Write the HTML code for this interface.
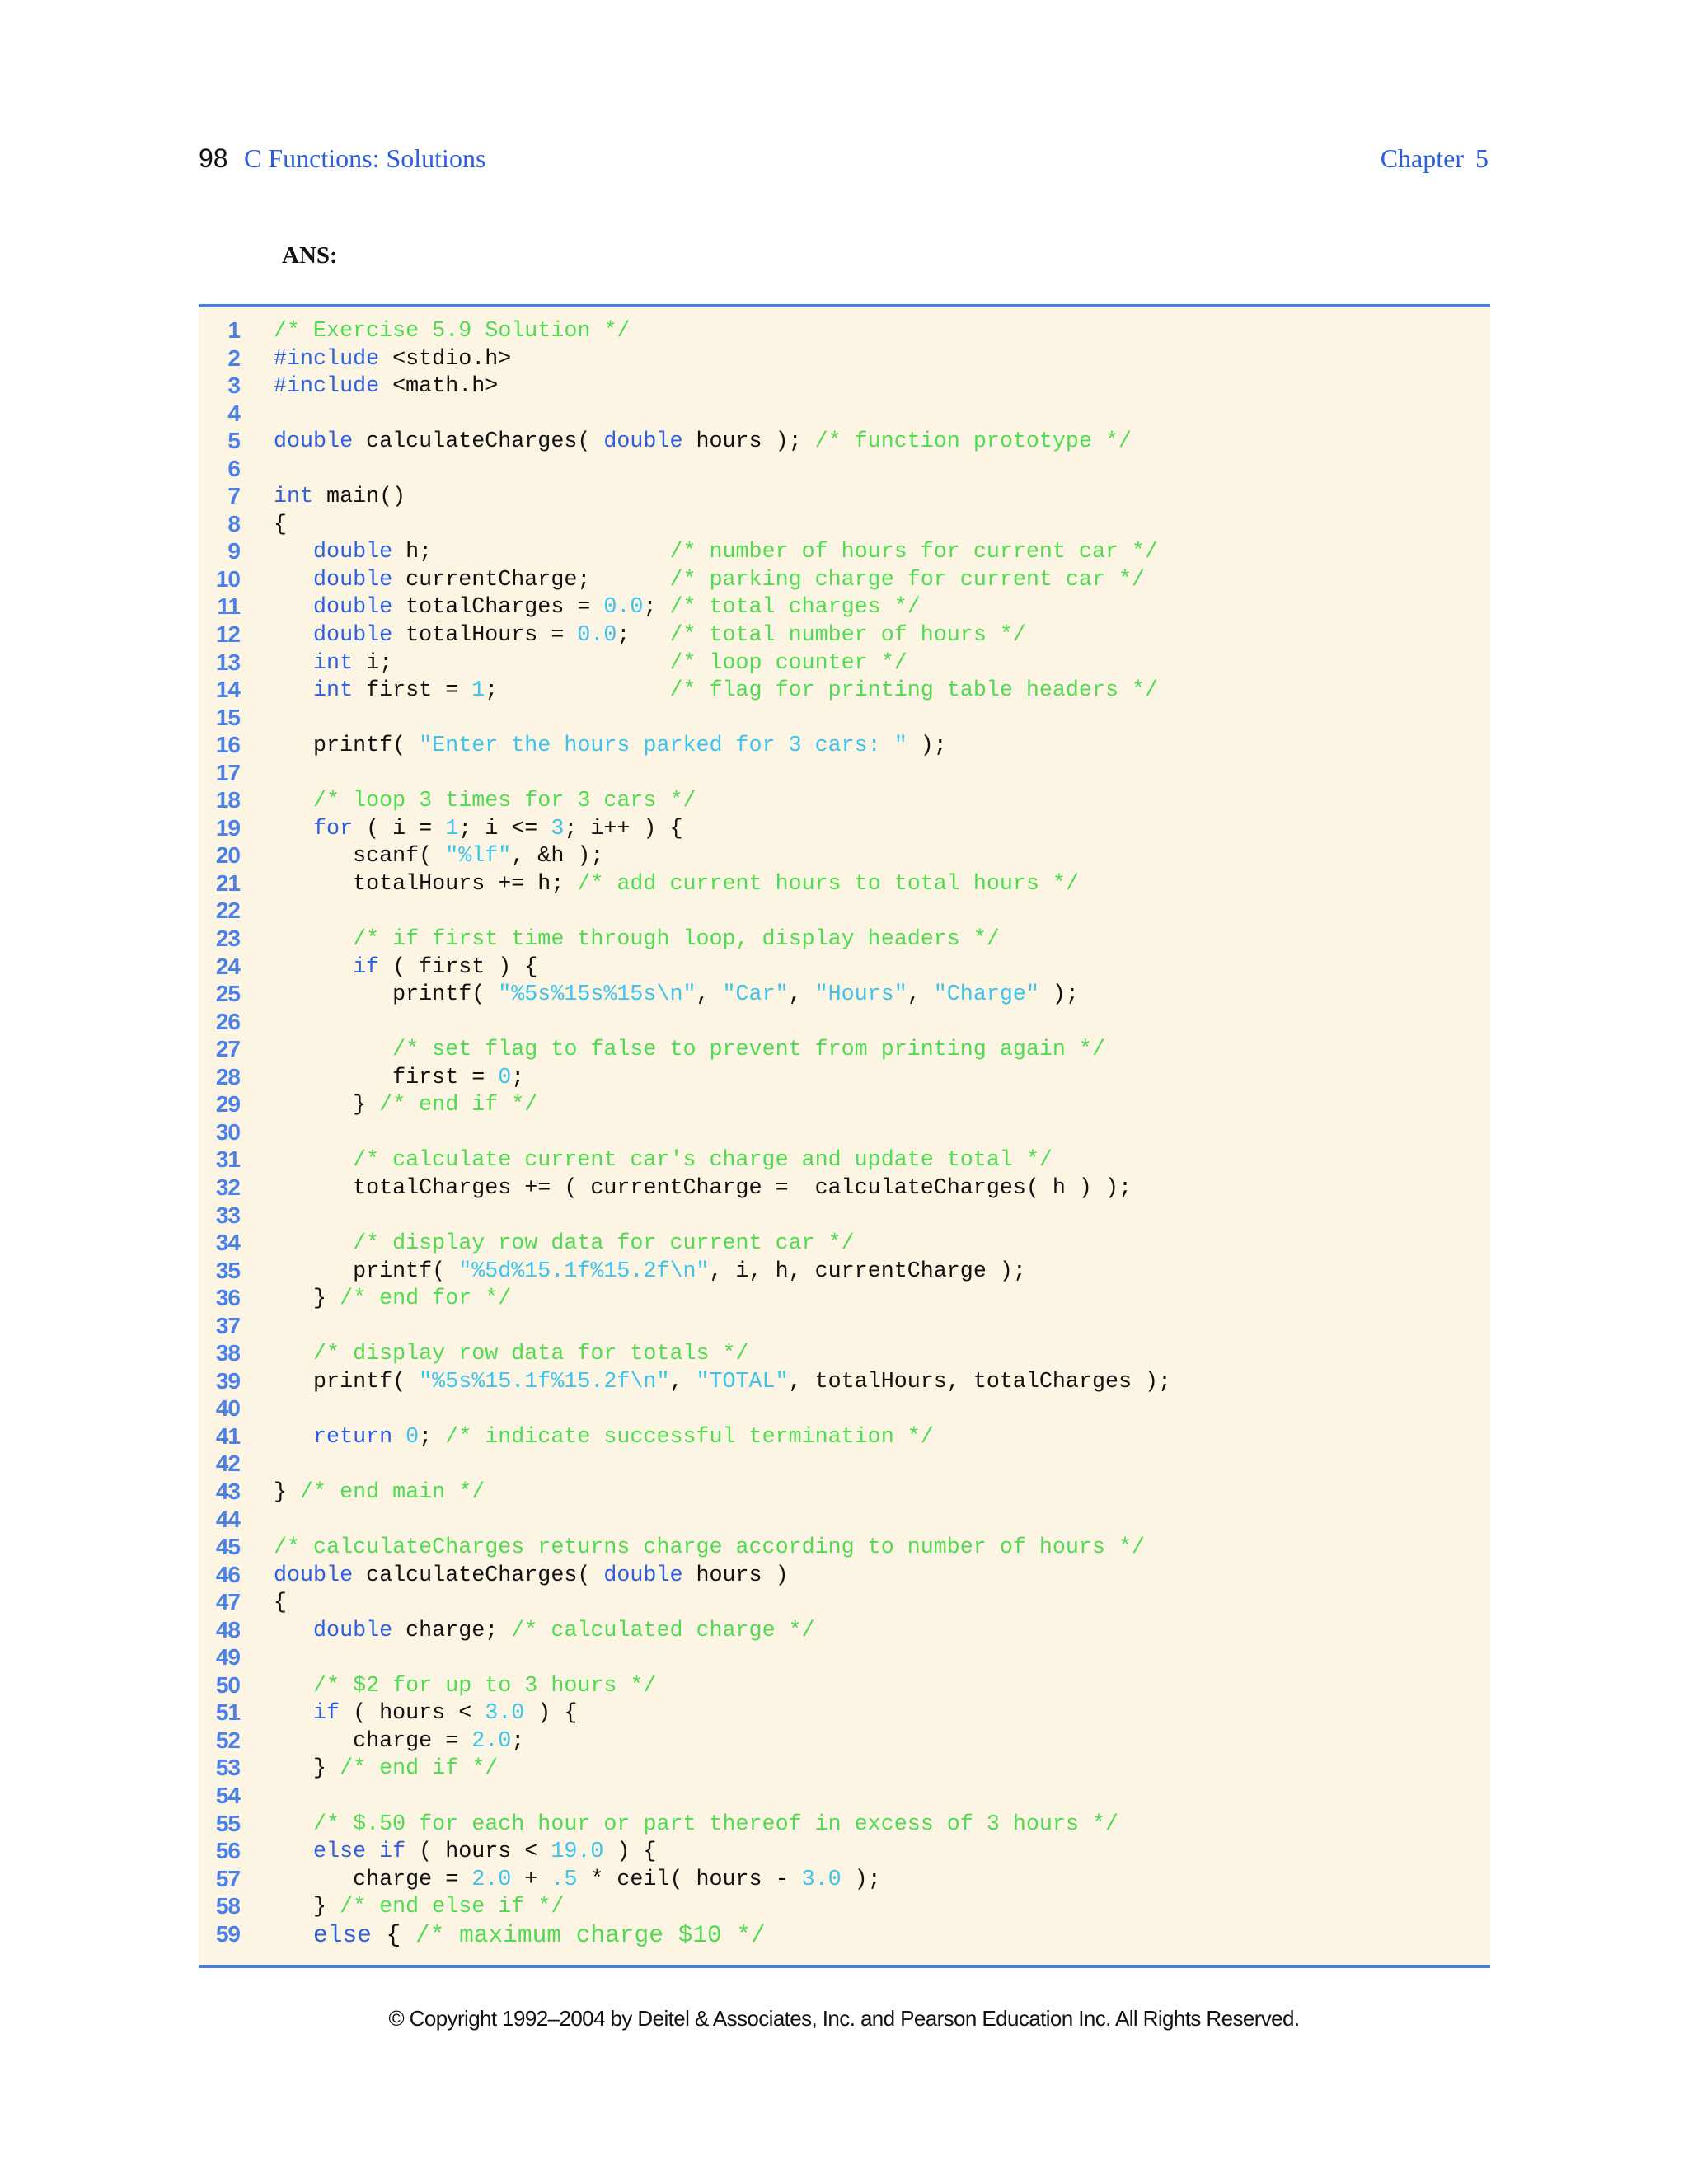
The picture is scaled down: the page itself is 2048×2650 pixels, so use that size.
<!DOCTYPE html>
<html><head><meta charset="utf-8"><style>
html,body{margin:0;padding:0;background:#fff;width:2048px;height:2650px;position:relative;overflow:hidden}
.hdr{position:absolute;top:172px;font-size:32px;line-height:40px}
.pn{left:241px;font-family:"Liberation Sans",sans-serif;color:#111}
.ti{left:296px;font-family:"Liberation Serif",serif;color:#2d5fe0}
.ch{right:242px;font-family:"Liberation Serif",serif;color:#2d5fe0;word-spacing:6px}
.ans{position:absolute;left:342px;top:294px;font:bold 29px "Liberation Serif",serif;color:#111}
.box{position:absolute;left:241px;top:369px;width:1567px;height:2019px;background:#fdf5e3;border-top:4px solid #4a80dc;border-bottom:4px solid #4a80dc;box-sizing:border-box}
.nums{position:absolute;left:241px;top:384px;width:50px;text-align:right;font:bold 28px/33.54px "Liberation Sans",sans-serif;color:#4a80e8;letter-spacing:-1px}
pre{position:absolute;left:332px;top:386px;margin:0;font:26.7px/33.54px "Liberation Mono",monospace;color:#111}
.k{color:#2d5fe0}.c{color:#52da52}.s{color:#3cc3ee}
.big{font-size:29.5px}
.foot{position:absolute;left:0;width:2048px;top:2434px;text-align:center;font:26px "Liberation Sans",sans-serif;color:#111;letter-spacing:-0.6px}
</style></head><body>
<div class="hdr pn">98</div>
<div class="hdr ti">C Functions: Solutions</div>
<div class="hdr ch">Chapter 5</div>
<div class="ans">ANS:</div>
<div class="box"></div>
<div class="nums">1<br>2<br>3<br>4<br>5<br>6<br>7<br>8<br>9<br>10<br>11<br>12<br>13<br>14<br>15<br>16<br>17<br>18<br>19<br>20<br>21<br>22<br>23<br>24<br>25<br>26<br>27<br>28<br>29<br>30<br>31<br>32<br>33<br>34<br>35<br>36<br>37<br>38<br>39<br>40<br>41<br>42<br>43<br>44<br>45<br>46<br>47<br>48<br>49<br>50<br>51<br>52<br>53<br>54<br>55<br>56<br>57<br>58<br>59</div>
<pre><span class="c">/* Exercise 5.9 Solution */</span>
<span class="k">#include</span> &lt;stdio.h&gt;
<span class="k">#include</span> &lt;math.h&gt;

<span class="k">double</span> calculateCharges( <span class="k">double</span> hours ); <span class="c">/* function prototype */</span>

<span class="k">int</span> main()
{
   <span class="k">double</span> h;                  <span class="c">/* number of hours for current car */</span>
   <span class="k">double</span> currentCharge;      <span class="c">/* parking charge for current car */</span>
   <span class="k">double</span> totalCharges = <span class="s">0.0</span>; <span class="c">/* total charges */</span>
   <span class="k">double</span> totalHours = <span class="s">0.0</span>;   <span class="c">/* total number of hours */</span>
   <span class="k">int</span> i;                     <span class="c">/* loop counter */</span>
   <span class="k">int</span> first = <span class="s">1</span>;             <span class="c">/* flag for printing table headers */</span>

   printf( <span class="s">"Enter the hours parked for 3 cars: "</span> );

   <span class="c">/* loop 3 times for 3 cars */</span>
   <span class="k">for</span> ( i = <span class="s">1</span>; i &lt;= <span class="s">3</span>; i++ ) {
      scanf( <span class="s">"%lf"</span>, &amp;h );
      totalHours += h; <span class="c">/* add current hours to total hours */</span>

      <span class="c">/* if first time through loop, display headers */</span>
      <span class="k">if</span> ( first ) {
         printf( <span class="s">"%5s%15s%15s\n"</span>, <span class="s">"Car"</span>, <span class="s">"Hours"</span>, <span class="s">"Charge"</span> );

         <span class="c">/* set flag to false to prevent from printing again */</span>
         first = <span class="s">0</span>;
      } <span class="c">/* end if */</span>

      <span class="c">/* calculate current car's charge and update total */</span>
      totalCharges += ( currentCharge =  calculateCharges( h ) );

      <span class="c">/* display row data for current car */</span>
      printf( <span class="s">"%5d%15.1f%15.2f\n"</span>, i, h, currentCharge );
   } <span class="c">/* end for */</span>

   <span class="c">/* display row data for totals */</span>
   printf( <span class="s">"%5s%15.1f%15.2f\n"</span>, <span class="s">"TOTAL"</span>, totalHours, totalCharges );

   <span class="k">return</span> <span class="s">0</span>; <span class="c">/* indicate successful termination */</span>

} <span class="c">/* end main */</span>

<span class="c">/* calculateCharges returns charge according to number of hours */</span>
<span class="k">double</span> calculateCharges( <span class="k">double</span> hours )
{
   <span class="k">double</span> charge; <span class="c">/* calculated charge */</span>

   <span class="c">/* $2 for up to 3 hours */</span>
   <span class="k">if</span> ( hours &lt; <span class="s">3.0</span> ) {
      charge = <span class="s">2.0</span>;
   } <span class="c">/* end if */</span>

   <span class="c">/* $.50 for each hour or part thereof in excess of 3 hours */</span>
   <span class="k">else if</span> ( hours &lt; <span class="s">19.0</span> ) {
      charge = <span class="s">2.0</span> + <span class="s">.5</span> * ceil( hours - <span class="s">3.0</span> );
   } <span class="c">/* end else if */</span>
   <span class="big"><span class="k">else</span> { <span class="c">/* maximum charge $10 */</span></span></pre>
<div class="foot">© Copyright 1992–2004 by Deitel &amp; Associates, Inc. and Pearson Education Inc. All Rights Reserved.</div>
</body></html>
